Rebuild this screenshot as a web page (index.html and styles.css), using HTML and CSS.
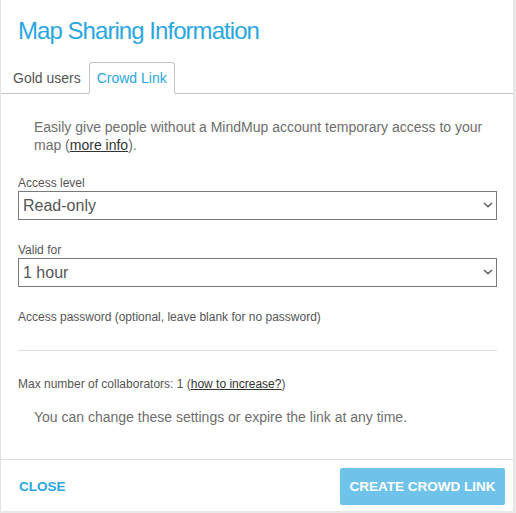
FILE: index.html
```html
<!DOCTYPE html>
<html lang="en">
<head>
<meta charset="utf-8">
<title>Map Sharing Information</title>
<link rel="stylesheet" href="styles.css">
</head>
<body>
<div class="dialog">
  <div class="header">
    <h1 class="title">Map Sharing Information</h1>
  </div>
  <ul class="tabs">
    <li class="tab"><a>Gold users</a></li>
    <li class="tab active"><a>Crowd Link</a></li>
  </ul>
  <div class="content">
    <p class="intro">Easily give people without a MindMup account temporary access to your map (<a class="link">more info</a>).</p>
    <label class="label first">Access level</label>
    <div class="select-wrap">
      <select class="select"><option>Read-only</option></select>
      <svg class="chev" width="10" height="6" viewBox="0 0 10 6"><path d="M1 1 L5 4.6 L9 1" fill="none" stroke="#666" stroke-width="1.6"/></svg>
    </div>
    <label class="label">Valid for</label>
    <div class="select-wrap">
      <select class="select"><option>1 hour</option></select>
      <svg class="chev" width="10" height="6" viewBox="0 0 10 6"><path d="M1 1 L5 4.6 L9 1" fill="none" stroke="#666" stroke-width="1.6"/></svg>
    </div>
    <label class="label">Access password (optional, leave blank for no password)</label>
    <div class="password"></div>
    <p class="small">Max number of collaborators: 1 (<a class="link">how to increase?</a>)</p>
    <p class="note">You can change these settings or expire the link at any time.</p>
  </div>
  <div class="footer">
    <button class="btn-close">CLOSE</button>
    <button class="btn-create">CREATE CROWD LINK</button>
  </div>
</div>
</body>
</html>
```
FILE: styles.css
```css
html, body {
  margin: 0;
  padding: 0;
  background: #e8e8e8;
}
body {
  font-family: "Liberation Sans", Arial, sans-serif;
  color: #666;
}
.dialog {
  width: 512px;
  background: #fff;
  border-left: 1px solid #e2e2e2;
  box-sizing: content-box;
  box-shadow: 0 1px 1px rgba(0, 0, 0, 0.12);
}
.header {
  padding: 17px 17px 0 17px;
}
.title {
  margin: 0;
  font-size: 24px;
  line-height: 28px;
  font-weight: normal;
  color: #2aa7e0;
  letter-spacing: -0.95px;
}
.tabs {
  list-style: none;
  margin: 17px 0 0 0;
  padding: 0 0 0 5px;
  display: flex;
  border-bottom: 1px solid #c4c4c4;
}
.tab {
  margin-bottom: -1px;
}
.tab a {
  display: block;
  padding: 0 7px 0 6px;
  line-height: 30px;
  font-size: 14px;
  color: #555;
  border: 1px solid transparent;
  border-radius: 3px 3px 0 0;
}
.tab.active a {
  padding: 0 7px 0 7px;
  color: #2aa7e0;
  background: #fff;
  border-color: #c4c4c4 #c4c4c4 transparent #c4c4c4;
}
.content {
  padding: 24px 16px 0 17px;
}
.intro, .note {
  margin: 0;
  padding: 0 0 0 16px;
  font-size: 14px;
  line-height: 18px;
  color: #6e6e6e;
}
.link {
  color: #333;
  text-decoration: underline;
}
.label {
  display: block;
  margin-top: 23px;
  font-size: 12px;
  line-height: 15px;
  color: #555;
}
.label.first {
  margin-top: 22px;
}
.select-wrap {
  position: relative;
}
.select {
  display: block;
  width: 100%;
  height: 29px;
  margin: 0;
  padding: 0 0 0 4px;
  border: 1px solid #7a7a7a;
  border-radius: 0;
  background: #fff;
  font-family: "Liberation Sans", Arial, sans-serif;
  font-size: 16px;
  color: #555;
  -webkit-appearance: none;
  appearance: none;
  box-sizing: border-box;
}
.chev {
  position: absolute;
  right: 4px;
  top: 11px;
  pointer-events: none;
}
.password {
  height: 25px;
  border-bottom: 1px solid #ddd;
}
.small {
  margin: 26px 0 0 0;
  font-size: 12px;
  line-height: 15px;
  color: #555;
}
.note {
  margin-top: 16px;
}
.footer {
  margin-top: 33px;
  border-top: 1px solid #ddd;
  padding: 8px 8px 6px 8px;
  display: flex;
  justify-content: space-between;
  align-items: center;
}
.btn-close {
  border: 0;
  background: transparent;
  padding: 0 10px;
  height: 37px;
  font-family: "Liberation Sans", Arial, sans-serif;
  font-weight: bold;
  font-size: 13.5px;
  color: #2aa7e0;
}
.btn-create {
  border: 0;
  border-radius: 2px;
  background: #6fc3ea;
  color: #fff;
  padding: 0 9px;
  height: 37px;
  width: 165px;
  font-family: "Liberation Sans", Arial, sans-serif;
  font-weight: bold;
  font-size: 13.5px;
}
```
